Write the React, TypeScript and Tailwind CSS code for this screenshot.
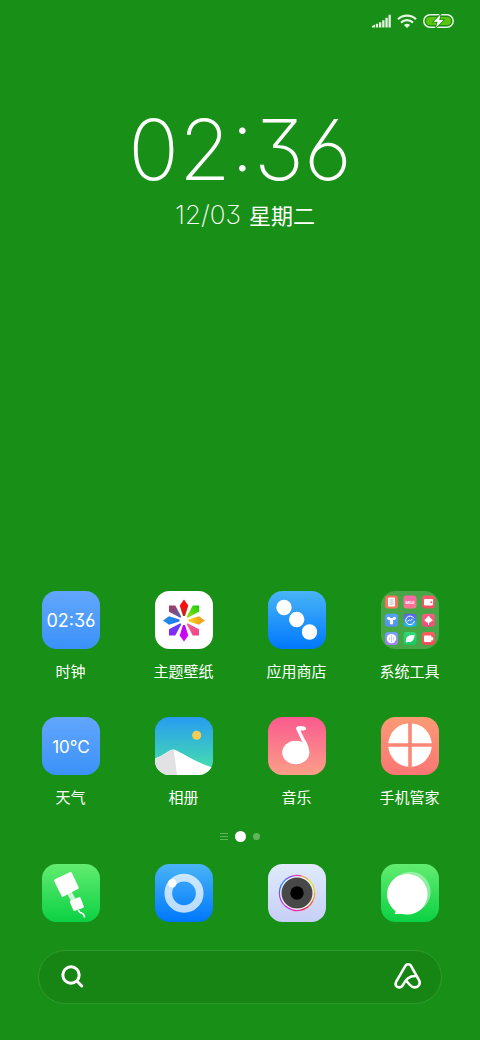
import { type ReactNode } from "react";

const latin = "font-['Inter','Noto_Sans_CJK_SC',sans-serif]";
const digits = "[font-feature-settings:'cv03','cv09','ss01']";

interface Tile {
  id: string;
  label: string;
  from: string;
  to: string;
  art: ReactNode;
}

const petals = [
  { angle: 0, outer: "#f81010", inner: "#b83018" },
  { angle: 90, outer: "#f0a81c", inner: "#f8d820" },
  { angle: 180, outer: "#d000f8", inner: "#b010e8" },
  { angle: 270, outer: "#2088e8", inner: "#2874f0" },
];

const cornerPetals = [
  { angle: 0, outer: "#b03458", inner: "#4868b0" },
  { angle: 90, outer: "#10d010", inner: "#a0e010" },
  { angle: 180, outer: "#f84080", inner: "#e068a0" },
  { angle: 270, outer: "#9020f8", inner: "#5048f0" },
];

const lensColors = [
  "#f03cb0", "#f0a040", "#e0e020", "#f0d020", "#f8a020", "#f86030",
  "#f02840", "#f020a0", "#e820e0", "#e030f0", "#a040f8", "#4070f8",
  "#3088f0", "#8050e8",
];

function LensRing() {
  const step = 360 / lensColors.length;
  return (
    <>
      {lensColors.map((color, i) => (
        <circle
          key={i}
          cx="29"
          cy="29"
          r="17.6"
          fill="none"
          stroke={color}
          strokeWidth="1.3"
          pathLength={360}
          strokeDasharray={`${step + 1} ${360 - step - 1}`}
          transform={`rotate(${i * step - 103} 29 29)`}
        />
      ))}
    </>
  );
}

const miniTiles: { color: string; to: string; art: ReactNode }[] = [
  {
    color: "#f8705c",
    to: "#f87860",
    art: (
      <>
        <rect x="3" y="2" width="7" height="9" rx="1" fill="#fff" />
        <rect x="4.5" y="3.5" width="4" height="6" fill="#ddd" />
      </>
    ),
  },
  {
    color: "#f868a8",
    to: "#f87890",
    art: (
      <text x="6.5" y="8.2" textAnchor="middle" fontSize="4" fontWeight="700" fill="#fff">
        MIUI
      </text>
    ),
  },
  {
    color: "#f85c70",
    to: "#f05060",
    art: (
      <>
        <rect x="2" y="3.5" width="9" height="6.5" rx="1" fill="#fff" />
        <circle cx="9.3" cy="6.8" r="1" fill="#f05868" />
      </>
    ),
  },
  {
    color: "#58a0f8",
    to: "#5890f0",
    art: (
      <path d="M2 4.2c1-1.6 2.4-1.4 3.2 0h2.6c.8-1.4 2.2-1.6 3.2 0-.2 1.8-1.7 2.4-2.9 2V10.5H4.9V6.2C3.7 6.6 2.2 6 2 4.2Z" fill="#fff" />
    ),
  },
  {
    color: "#6060e8",
    to: "#28b8e8",
    art: (
      <>
        <path d="M10.3 4.5A4.3 4.3 0 1 0 10.8 7.2" fill="none" stroke="#fff" strokeWidth="1" />
        <path d="M4 7.5 6 6l1 1 2-2" fill="none" stroke="#fff" strokeWidth="1" />
      </>
    ),
  },
  {
    color: "#f86080",
    to: "#e85078",
    art: <path d="M6.5 2 8.5 4.3 10.8 6.5 8 8.8H7V11H6V8.8H5L2.2 6.5 4.5 4.3Z" fill="#fff" />,
  },
  {
    color: "#70a0f0",
    to: "#a880e8",
    art: (
      <>
        <circle cx="6.5" cy="6.5" r="4.7" fill="#fff" />
        <path d="M6.5 3V10M4.5 5V8M8.5 5V8" stroke="#b0b8e8" strokeWidth=".7" />
      </>
    ),
  },
  {
    color: "#30d878",
    to: "#18c860",
    art: <path d="M2.5 9.8C1.5 5 5 2.8 11 2.6 11.2 7 8.5 11.2 4.2 9.6L3 11Z" fill="#fff" />,
  },
  {
    color: "#f86060",
    to: "#f04c58",
    art: <path d="M3 3.5H8.5a1 1 0 0 1 1 1V5.5L11.2 4.8V8.5L9.5 7.8V9a1 1 0 0 1-1 1H3a1 1 0 0 1-1-1V4.5a1 1 0 0 1 1-1Z" fill="#fff" />,
  },
];

function FolderArt() {
  return (
    <>
      {miniTiles.map((tile, i) => (
        <g key={i} transform={`translate(${4 + (i % 3) * 18.5} ${4.5 + Math.floor(i / 3) * 18.3})`}>
          <linearGradient id={`mini-${i}`} x1="0" y1="0" x2="0" y2="1">
            <stop stopColor={tile.color} />
            <stop offset="1" stopColor={tile.to} />
          </linearGradient>
          <rect width="13" height="13" rx="3" fill={`url(#mini-${i})`} />
          {tile.art}
        </g>
      ))}
    </>
  );
}

const apps: Tile[] = [
  {
    id: "clock",
    label: "时钟",
    from: "#62a6fc",
    to: "#3b92fa",
    art: (
      <text x="29" y="36" textAnchor="middle" fontSize="18" fill="#fff">
        02:36
      </text>
    ),
  },
  {
    id: "themes",
    label: "主题壁纸",
    from: "#ffffff",
    to: "#ffffff",
    art: (
      <>
        {petals.map((p) => (
          <g key={p.angle} transform={`rotate(${p.angle} 29 29.5)`}>
            <linearGradient id={`petal-${p.angle}`} x1="0" y1="0" x2="0" y2="1">
              <stop offset=".4" stopColor={p.outer} />
              <stop offset="1" stopColor={p.inner} />
            </linearGradient>
            <path d="M29 8.5 33.3 14.5 30 25H28L24.7 14.5Z" fill={`url(#petal-${p.angle})`} />
          </g>
        ))}
        {cornerPetals.map((p) => (
          <g key={p.angle} transform={`rotate(${p.angle} 29 29.5)`}>
            <linearGradient id={`corner-${p.angle}`} x1="0" y1="0" x2="1" y2="1">
              <stop stopColor={p.outer} />
              <stop offset="1" stopColor={p.inner} />
            </linearGradient>
            <path d="M14 14.5H20.3L26.3 25.8 25.3 26.8 14 20.8Z" fill={`url(#corner-${p.angle})`} />
          </g>
        ))}
      </>
    ),
  },
  {
    id: "store",
    label: "应用商店",
    from: "#49b4f6",
    to: "#0078ff",
    art: (
      <g fill="#fff">
        <circle cx="16" cy="16.5" r="7.7" />
        <circle cx="28.7" cy="28.5" r="7.7" />
        <circle cx="41.5" cy="41" r="7.7" />
      </g>
    ),
  },
  { id: "tools", label: "系统工具", from: "#47a645", to: "#47a645", art: <FolderArt /> },
  {
    id: "weather",
    label: "天气",
    from: "#62a6fc",
    to: "#3b92fa",
    art: (
      <text x="29" y="36" textAnchor="middle" fontSize="17" fill="#fff">
        10℃
      </text>
    ),
  },
  {
    id: "gallery",
    label: "相册",
    from: "#289bf2",
    to: "#48e6a6",
    art: (
      <>
        <circle cx="41.7" cy="18.3" r="4.5" fill="#f8cc50" />
        <path d="M0 41.5C7 39 12 35 16 33Q18.5 32 21 33.2C33 39 42 46 58 50.5V58H0Z" fill="#fff" />
        <path d="M0 41.5C7 39 12 35 16 33Q17.5 32.5 18.8 32.7L22 58H0Z" fill="#e2e2e4" />
      </>
    ),
  },
  {
    id: "music",
    label: "音乐",
    from: "#fb5a8f",
    to: "#fb9f88",
    art: (
      <g fill="#fff">
        <ellipse cx="27.8" cy="35.5" rx="13.6" ry="11.7" />
        <path d="M28 11.5 34.5 25.5 41 33C40.5 28 38 24 36.5 22L31.8 12Z" />
        <path d="M28 11.5C28 8.5 33 8.5 36 9.5 39.5 10.7 38.5 13.5 34.5 13.6 31.5 13.7 28.5 13.5 28 11.5Z" />
      </g>
    ),
  },
  {
    id: "security",
    label: "手机管家",
    from: "#fb9a74",
    to: "#fb7674",
    art: (
      <>
        <circle cx="29" cy="28" r="21.8" fill="#fff" />
        <path d="M29 5V51" stroke="#fb8a74" strokeWidth="3.6" />
        <path d="M6 28H52" stroke="#fb8674" strokeWidth="3.6" />
      </>
    ),
  },
];

const dock: Tile[] = [
  {
    id: "phone",
    label: "电话",
    from: "#62ec70",
    to: "#0bd143",
    art: (
      <>
        <path d="M27.5 29 33 39" stroke="#fff" strokeOpacity=".75" strokeWidth="5" />
        <g fill="#fff" stroke="#fff" strokeWidth="3" strokeLinejoin="round">
          <path d="M13.6 16.5 28.4 9.5 35.2 23.7 20.8 31.2Z" />
          <path d="M29.4 37.8 37.2 34.6 40.3 42.5 32.6 45.4Z" />
        </g>
        <path d="M36.5 46C37 51 42.5 47 42.5 53.5" fill="none" stroke="#fff" strokeWidth="1.5" />
      </>
    ),
  },
  {
    id: "browser",
    label: "浏览器",
    from: "#49b4f6",
    to: "#0078ff",
    art: (
      <>
        <circle cx="29" cy="29.3" r="15.7" fill="none" stroke="#fff" strokeOpacity=".72" strokeWidth="7.7" />
        <circle cx="17.3" cy="19.3" r="4.2" fill="#fff" />
      </>
    ),
  },
  {
    id: "camera",
    label: "相机",
    from: "#e0ebfc",
    to: "#c6cff6",
    art: (
      <>
        <circle cx="29" cy="29" r="17.5" fill="#eef2ff" />
        <LensRing />
        <circle cx="29" cy="29" r="15.5" fill="#484848" />
        <circle cx="29" cy="29" r="6.7" fill="#000" />
      </>
    ),
  },
  {
    id: "messages",
    label: "短信",
    from: "#62ec70",
    to: "#0bd143",
    art: (
      <g fill="#fff">
        <circle cx="29.5" cy="28" r="20.2" fillOpacity=".4" />
        <circle cx="26.3" cy="30.3" r="20.3" />
        <path d="M12.5 44 14.5 47.5Q14.7 49 13.5 50H26V44Z" />
      </g>
    ),
  },
];

function TileIcon({ id, from, to, art }: Tile) {
  return (
    <svg viewBox="0 0 58 58" className={`size-[58px] ${latin} ${digits}`} aria-hidden="true">
      <defs>
        <linearGradient id={`bg-${id}`} x1="0" y1="0" x2="0" y2="1">
          <stop stopColor={from} />
          <stop offset="1" stopColor={to} />
        </linearGradient>
        <clipPath id={`clip-${id}`}>
          <rect width="58" height="58" rx="14.5" />
        </clipPath>
      </defs>
      <g clipPath={`url(#clip-${id})`}>
        <rect width="58" height="58" fill={`url(#bg-${id})`} />
        {art}
      </g>
    </svg>
  );
}

function StatusBar() {
  return (
    <header className="flex h-[41px] items-center justify-end gap-1.5 pr-[26px] text-[#e6f4e4]">
      <svg viewBox="0 0 19 14" className="h-3.5 w-[19px]" fill="currentColor" aria-label="信号">
        <path d="M0 12 3 10.5V13.5H0ZM3.8 9.8H6.1V13.5H3.8ZM7 8.2H9.3V13.5H7ZM10.2 6.2H12.5V13.5H10.2ZM13.4 3.8H15.7V13.5H13.4ZM16.5 .8H18.8V13.5H16.5Z" />
      </svg>
      <svg viewBox="0 0 20 14" className="h-3.5 w-5" fill="none" stroke="currentColor" strokeWidth="2.2" aria-label="无线网络">
        <path d="M1 5.2C6 .4 14 .4 19 5.2" />
        <path d="M4 8.6C7.5 5.3 12.5 5.3 16 8.6" />
        <path d="M6.8 11C9 9.2 11 9.2 13.2 11L10 14Z" fill="currentColor" stroke="none" />
      </svg>
      <svg viewBox="0 0 31 14" className="h-3.5 w-[31px]" aria-label="正在充电">
        <rect x=".8" y=".8" width="29.4" height="12.4" rx="6.2" fill="#188d14" stroke="currentColor" strokeWidth="1.5" />
        <rect x="3" y="3" width="25" height="8" rx="4" fill="#5bc40f" />
        <path d="M17.5 .5 10.5 7.7H14.5L13 13.5 20.5 6H16.3Z" fill="#fff" stroke="#188d14" strokeWidth="1.6" paintOrder="stroke" />
      </svg>
    </header>
  );
}

function ClockWidget() {
  return (
    <section className={`mt-[60px] flex flex-col items-center text-white ${latin}`}>
      <time className={`text-[84px] leading-[98px] font-extralight ${digits}`}>02:36</time>
      <p className="flex items-baseline gap-2 pt-px pl-2.5 leading-7">
        <span className={`text-[26px] font-extralight ${digits}`}>12/03</span>
        <span className="text-[22px] font-['Noto_Sans_CJK_SC',sans-serif]">星期二</span>
      </p>
    </section>
  );
}

function PageDots() {
  return (
    <div className="mt-[17px] flex h-4 items-center justify-center gap-[7px]">
      <svg viewBox="0 0 8 8" className="size-2" stroke="#5db25a" aria-hidden="true">
        <path d="M0 1.5H8M0 4.5H8M0 7.5H8" />
      </svg>
      <span className="size-[11px] rounded-full bg-white" />
      <span className="size-[7px] rounded-full bg-[#62b55f]" />
    </div>
  );
}

function SearchBar() {
  return (
    <form
      className="mx-[38px] mt-7 mb-9 flex h-[54px] items-center rounded-full border border-[#2f9a2b] bg-[#178514] pr-[18px] pl-5"
      onSubmit={(e) => e.preventDefault()}
    >
      <label htmlFor="search" className="shrink-0">
        <svg viewBox="0 0 26 26" className="size-[26px]" fill="none" stroke="#fff" strokeWidth="3" strokeLinecap="round" aria-label="搜索">
          <circle cx="12" cy="11" r="8.2" />
          <path d="M18.3 17.5 22.8 22" />
        </svg>
      </label>
      <input id="search" type="text" className="min-w-0 flex-1 bg-transparent px-3 text-base text-white outline-none" />
      <button type="button" aria-label="小爱同学" className="shrink-0">
        <svg viewBox="0 0 32 30" className="h-[30px] w-8" fill="none" stroke="#fff" strokeWidth="2.6" strokeLinecap="round" strokeLinejoin="round" aria-hidden="true">
          <path d="M15 18.5 19 23C20.5 24.7 21.800 25.400 23.500 25.400 27.500 25.400 30 21.800 28 18.200L20 3.800C18.700 1.700 15.700 1.700 14.400 3.800L5.200 19.600C3.600 22.600 5.300 25.400 8 25.400 9.800 25.400 11 24.600 12 22.800 15 17.300 18 13.600 25.400 14" />
        </svg>
      </button>
    </form>
  );
}

export default function App() {
  return (
    <main className="flex min-h-screen flex-col bg-[#188f16] font-['Noto_Sans_CJK_SC',sans-serif]">
      <StatusBar />
      <ClockWidget />
      <div className="mt-auto grid grid-cols-4 gap-y-8 px-3.5 pt-10">
        {apps.map((app) => (
          <button key={app.id} type="button" className="flex flex-col items-center gap-2 text-[15px] leading-7 text-white">
            <TileIcon {...app} />
            <span>{app.label}</span>
          </button>
        ))}
      </div>
      <PageDots />
      <nav className="mt-5 grid grid-cols-4 px-3.5">
        {dock.map((app) => (
          <button key={app.id} type="button" aria-label={app.label} className="flex justify-center">
            <TileIcon {...app} />
          </button>
        ))}
      </nav>
      <SearchBar />
    </main>
  );
}
